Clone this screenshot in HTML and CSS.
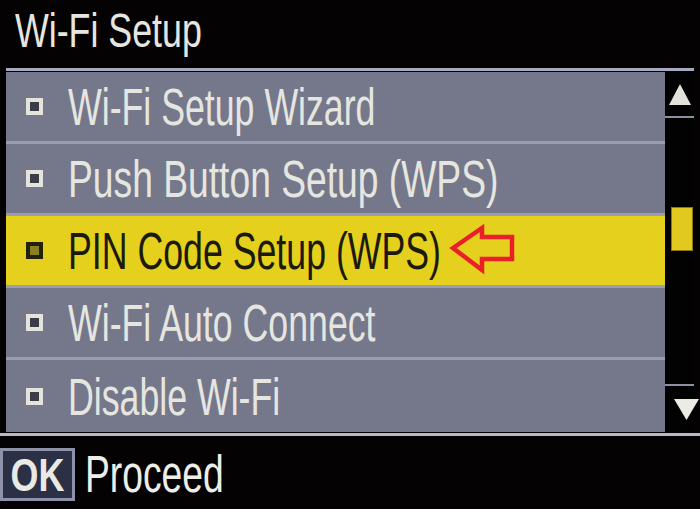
FILE: index.html
```html
<!DOCTYPE html>
<html>
<head>
<meta charset="utf-8">
<link rel="stylesheet" href="styles.css">
</head>
<body>
<div class="screen">
  <div class="title"><span class="lbl">Wi-Fi Setup</span></div>
  <div class="panel">
    <div class="list">
      <div class="row"><span class="bullet"></span><span class="lbl">Wi-Fi Setup Wizard</span></div>
      <div class="row"><span class="bullet"></span><span class="lbl lbl--wide">Push Button Setup (WPS)</span></div>
      <div class="row row--active"><span class="bullet"></span><span class="lbl">PIN Code Setup (WPS)</span>
        <svg class="pointer" width="90" height="70" viewBox="0 0 90 70">
          <polygon points="14,32 43,12 43,21 73,21 73,43 43,43 43,54" fill="none" stroke="#ea1f2a" stroke-width="4.5" stroke-linejoin="miter"/>
        </svg>
      </div>
      <div class="row"><span class="bullet"></span><span class="lbl">Wi-Fi Auto Connect</span></div>
      <div class="row row--last"><span class="bullet"></span><span class="lbl">Disable Wi-Fi</span></div>
    </div>
    <div class="scroll">
      <div class="scroll-btn">
        <svg width="22" height="21" viewBox="0 0 22 21"><polygon points="11,0 22,21 0,21" fill="#e2e2da"/></svg>
      </div>
      <div class="scroll-track"><div class="thumb"></div></div>
      <div class="scroll-btn scroll-btn--down">
        <svg width="25" height="21" viewBox="0 0 25 21"><polygon points="0,0 25,0 12.5,21" fill="#ecece6"/></svg>
      </div>
    </div>
  </div>
  <div class="baseline"></div>
  <div class="footer">
    <span class="ok"><span class="ok-text">OK</span></span>
    <span class="lbl proceed">Proceed</span>
  </div>
</div>
</body>
</html>
```

FILE: styles.css
```css
html, body {
  margin: 0;
  padding: 0;
  background: #040202;
}
body {
  width: 700px;
  height: 509px;
  overflow: hidden;
  font-family: "Liberation Sans", Arial, sans-serif;
  color: #e4e4de;
}
.screen {
  display: flex;
  flex-direction: column;
  width: 700px;
  height: 509px;
}
.lbl {
  display: inline-block;
  white-space: nowrap;
  transform: scaleX(0.73);
  transform-origin: left center;
}
.title {
  height: 68px;
  box-sizing: border-box;
  padding: 4px 0 0 15px;
  font-size: 49px;
  line-height: 52px;
  color: #e6e6e0;
}
.panel {
  display: flex;
  margin: 0 6px 0 6px;
  border-top: 3px solid #a7a9be;
  padding-top: 1px;
}
.list {
  flex: 1;
  display: flex;
  flex-direction: column;
  background: #777a8d;
}
.row {
  position: relative;
  height: 69px;
  display: flex;
  align-items: center;
  padding-left: 20px;
  font-size: 51px;
  color: #e6e6e0;
  background: #75788b;
}
.row + .row {
  border-top: 3px solid #9b9eb2;
}
.row--last {
  height: 72px;
}
.row .bullet {
  flex: none;
  width: 9px;
  height: 9px;
  border: 4px solid #e4e4dc;
  background: #3a3c48;
  margin-right: 25px;
}
.row .lbl {
  transform: scaleX(0.7);
  line-height: 1;
  margin-top: 2px;
}
.row .lbl--wide {
  transform: scaleX(0.73);
}
.row--active {
  background: #e5d11d;
  color: #1b1a0c;
}
.row--active .bullet {
  border-color: #22200e;
  background: #8a8020;
}
.pointer {
  position: absolute;
  left: 433px;
  top: 0;
}
.scroll {
  width: 29px;
  flex: none;
  display: flex;
  flex-direction: column;
  background: #020202;
}
.scroll-btn {
  height: 44px;
  display: flex;
  align-items: center;
  justify-content: center;
  border-bottom: 2px solid #8d8fa3;
}
.scroll-btn--down {
  border-bottom: 0;
  border-top: 2px solid #8d8fa3;
  height: 46px;
  justify-content: flex-end;
}
.scroll-btn--down svg {
  margin-right: -5px;
}
.scroll-track {
  flex: 1;
  padding: 89px 0 0 6px;
}
.thumb {
  width: 22px;
  height: 44px;
  background: #e2c91f;
  box-shadow: inset 0 0 0 1px #8c7a10;
}
.baseline {
  height: 3px;
  margin-top: 1px;
  background: #b6b8ca;
}
.footer {
  display: flex;
  align-items: center;
  padding-top: 12px;
}
.ok {
  width: 75px;
  height: 53px;
  box-sizing: border-box;
  border: 3px solid #8d91aa;
  background: #2c3044;
  display: flex;
  align-items: center;
  justify-content: center;
  overflow: hidden;
}
.ok-text {
  display: inline-block;
  font-weight: bold;
  font-size: 46px;
  line-height: 1;
  color: #eaeae4;
  transform: scaleX(0.78);
}
.proceed {
  margin-left: 10px;
  font-size: 51px;
  line-height: 1;
  color: #eeeee8;
}
```
